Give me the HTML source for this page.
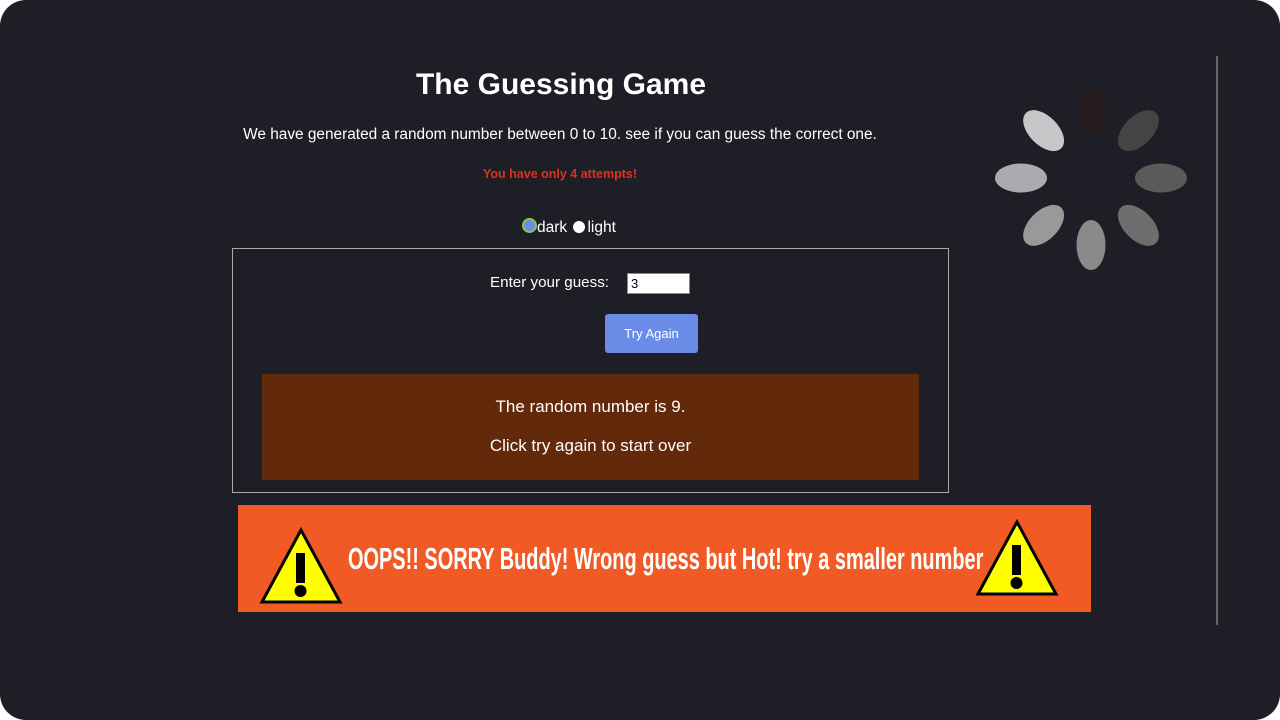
<!DOCTYPE html>
<html><head><meta charset="utf-8"><style>
html,body{margin:0;padding:0;background:#fff;}
body{width:1280px;height:720px;overflow:hidden;position:relative;font-family:"Liberation Sans",Arial,sans-serif;}
.frame{position:absolute;left:0;top:0;width:1280px;height:720px;background:#1e1f26;border-radius:26px;}
.a{position:absolute;white-space:nowrap;}
</style></head><body>
<div class="frame">
<div class="a" style="left:0;width:1122px;top:68px;text-align:center;color:#fff;font-weight:bold;font-size:30px;">The Guessing Game</div>
<div class="a" style="left:0;width:1120px;top:126px;text-align:center;color:#fff;font-size:15.4px;">We have generated a random number between 0 to 10. see if you can guess the correct one.</div>
<div class="a" style="left:0;width:1120px;top:167px;text-align:center;color:#e0311d;font-weight:bold;font-size:12.5px;">You have only 4 attempts!</div>
<div class="a" style="left:522px;top:218px;color:#fff;font-size:15.5px;">
<span style="display:inline-block;width:11px;height:11px;border-radius:50%;background:#6a8ee8;border:2px solid #8fc25a;vertical-align:-1px;"></span>dark <span style="display:inline-block;width:12px;height:12px;border-radius:50%;background:#fff;vertical-align:-1px;margin-left:2px;margin-right:2px;"></span>light</div>
<div class="a" style="left:232px;top:248px;width:715px;height:243px;border:1px solid #aaa;"></div>
<div class="a" style="left:490px;top:274px;color:#fff;font-size:15.2px;">Enter your guess:</div>
<div class="a" style="left:627px;top:273px;background:#fff;border:1px solid #888;font-size:13px;line-height:19px;padding-left:3px;box-sizing:border-box;width:63px;height:21px;">3</div>
<div class="a" style="left:605px;top:314px;width:93px;height:39px;background:#6a8be6;border-radius:3px;color:#fff;font-size:13px;line-height:39px;text-align:center;">Try Again</div>
<div class="a" style="left:262px;top:374px;width:657px;height:106px;background:#63290b;"></div>
<div class="a" style="left:262px;width:657px;top:397px;text-align:center;color:#fff;font-size:17px;">The random number is 9.</div>
<div class="a" style="left:262px;width:657px;top:436px;text-align:center;color:#fff;font-size:17px;">Click try again to start over</div>
<div class="a" style="left:238px;top:505px;width:853px;height:107px;background:#f15a24;"></div>
<div class="a" style="left:348px;top:541px;color:#fff;font-weight:bold;font-size:31px;transform:scaleX(0.643);transform-origin:0 0;">OOPS!! SORRY Buddy! Wrong guess but Hot! try a smaller number</div>
<svg class="a" style="left:0;top:0" width="1280" height="720">
<g stroke="#000" stroke-width="3" stroke-linejoin="miter">
<polygon points="301,530 262,602 340,602" fill="#ffff00"/>
<polygon points="1017,522 978,594 1056,594" fill="#ffff00"/>
</g>
<rect x="296" y="553" width="9" height="30" fill="#000"/><circle cx="300.5" cy="591" r="6" fill="#000"/>
<rect x="1012" y="545" width="9" height="30" fill="#000"/><circle cx="1016.5" cy="583" r="6" fill="#000"/>
<line x1="1217" y1="56" x2="1217" y2="625" stroke="#666" stroke-width="2"/>
<g transform="translate(1091,178)">
<ellipse cx="0" cy="-67" rx="14.5" ry="25" fill="#241c1e"/>
<ellipse cx="0" cy="-67" rx="14.5" ry="25" fill="#444" transform="rotate(45)"/>
<ellipse cx="0" cy="-70" rx="14.5" ry="26" fill="#5a5a5a" transform="rotate(90)"/>
<ellipse cx="0" cy="-67" rx="14.5" ry="25" fill="#6e6e6e" transform="rotate(135)"/>
<ellipse cx="0" cy="-67" rx="14.5" ry="25" fill="#8a8a8a" transform="rotate(180)"/>
<ellipse cx="0" cy="-67" rx="14.5" ry="25" fill="#999" transform="rotate(225)"/>
<ellipse cx="0" cy="-70" rx="14.5" ry="26" fill="#aaabae" transform="rotate(270)"/>
<ellipse cx="0" cy="-67" rx="14.5" ry="25" fill="#c6c7c9" transform="rotate(315)"/>
</g>
</svg>
</div>
</body></html>
